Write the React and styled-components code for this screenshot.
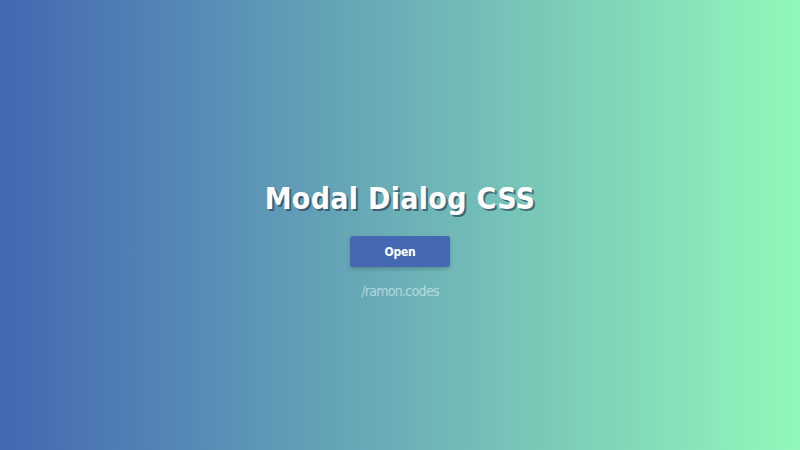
import React from "react";
import styled, { createGlobalStyle } from "styled-components";

const Global = createGlobalStyle`
  html, body { margin: 0; padding: 0; height: 100%; }
  body {
    font-family: "DejaVu Sans Condensed", "DejaVu Sans", sans-serif;
    background: linear-gradient(to right, #4367b3, #93f8bb);
  }
  #root { height: 100%; }
`;

const Page = styled.main`
  height: 450px;
  display: flex;
  flex-direction: column;
  align-items: center;
  justify-content: flex-start;
  padding-top: 178px;
  box-sizing: border-box;
`;

const Title = styled.h1`
  margin: 0;
  font-family: "DejaVu Sans Condensed", "DejaVu Sans", sans-serif;
  font-weight: 700;
  font-size: 30px;
  letter-spacing: 0.3px;
  line-height: 42px;
  color: #ffffff;
  text-shadow: 2px 2px 0 rgba(30, 50, 70, 0.6);
`;

const OpenButton = styled.button`
  margin-top: 16px;
  width: 100px;
  height: 31px;
  border: none;
  border-radius: 3px;
  background: #4568b3;
  color: #ffffff;
  font-family: "DejaVu Sans Condensed", "DejaVu Sans", sans-serif;
  font-weight: 700;
  font-size: 12px;
  letter-spacing: -0.2px;
  box-shadow: 0 2px 4px rgba(0, 0, 0, 0.2);
  cursor: pointer;
`;

const Credit = styled.a`
  margin-top: 16px;
  font-family: "DejaVu Sans Condensed", "DejaVu Sans", sans-serif;
  font-size: 14px;
  letter-spacing: -0.7px;
  color: rgba(255, 255, 255, 0.5);
  text-decoration: none;
`;

export default function App() {
  return (
    <>
      <Global />
      <Page>
        <Title>Modal Dialog CSS</Title>
        <OpenButton>Open</OpenButton>
        <Credit href="#">/ramon.codes</Credit>
      </Page>
    </>
  );
}
